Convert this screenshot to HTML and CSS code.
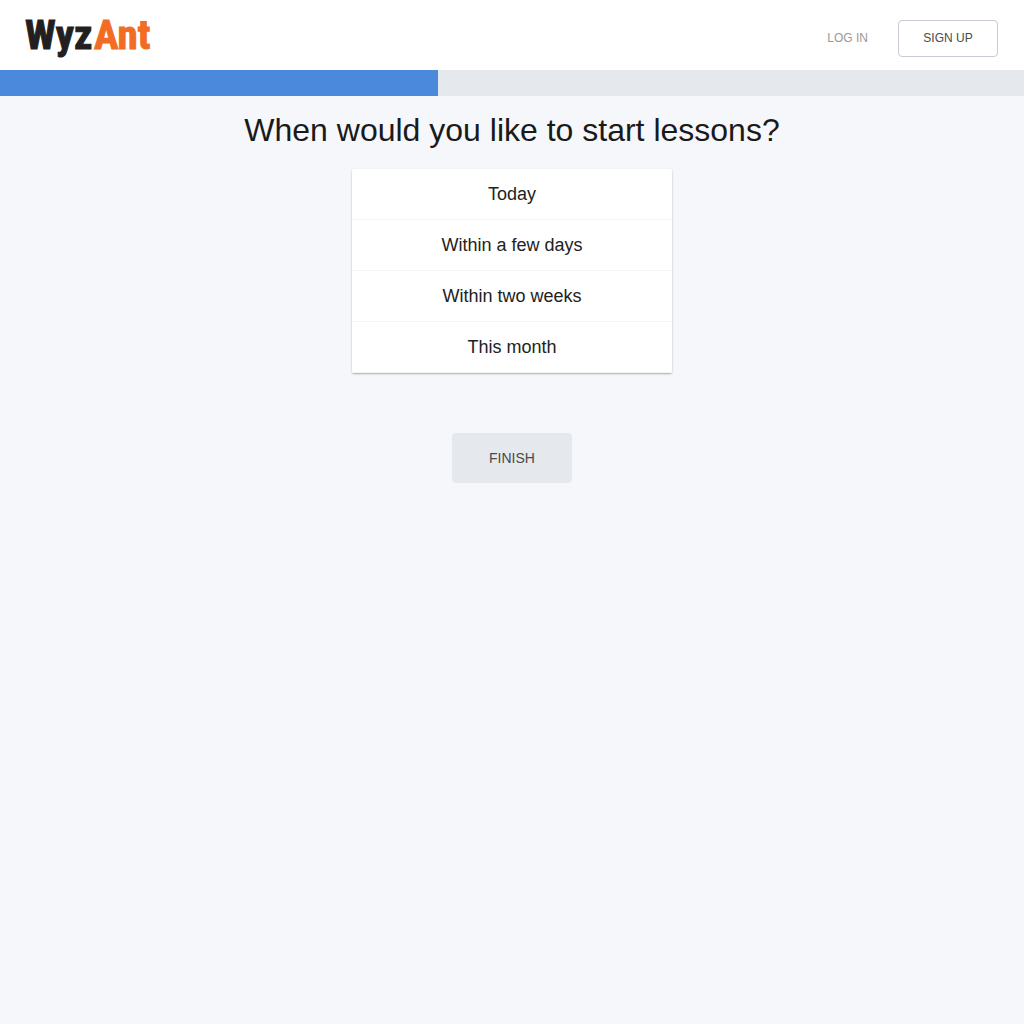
FILE: index.html
```html
<!DOCTYPE html>
<html lang="en">
<head>
  <meta charset="utf-8">
  <meta name="viewport" content="width=device-width, initial-scale=1">
  <title>WyzAnt</title>
  <link rel="stylesheet" href="styles.css">
</head>
<body>
  <header class="site-header">
    <a class="logo" href="#">
      <svg class="logo-mark" width="128" height="42" role="img" aria-label="WyzAnt">
        <text x="0" y="32" class="logo-text logo-dark">Wyz</text>
        <text x="69" y="32" class="logo-text logo-accent">Ant</text>
      </svg>
    </a>
    <nav class="account">
      <a class="log-in" href="#">LOG IN</a>
      <button class="sign-up" type="button">SIGN UP</button>
    </nav>
  </header>
  <div class="progress"><div class="progress-bar"></div></div>
  <main class="question">
    <h1 class="title">When would you like to start lessons?</h1>
    <div class="options">
      <button class="option" type="button">Today</button>
      <button class="option" type="button">Within a few days</button>
      <button class="option" type="button">Within two weeks</button>
      <button class="option" type="button">This month</button>
    </div>
    <button class="finish" type="button">FINISH</button>
  </main>
</body>
</html>
```
FILE: styles.css
```css
* {
  box-sizing: border-box;
}

body {
  margin: 0;
  background: #f5f7fb;
  color: #1a1a1a;
  font-family: "Liberation Sans", Arial, sans-serif;
}

button {
  font-family: inherit;
  cursor: pointer;
}

.site-header {
  display: flex;
  justify-content: space-between;
  align-items: flex-start;
  height: 70px;
  padding: 0 26px 0 25px;
  background: #fff;
}

.logo {
  display: block;
  padding-top: 17px;
  text-decoration: none;
}

.logo-mark {
  display: block;
  overflow: visible;
}

.logo-text {
  font-family: "Liberation Sans Narrow", "Roboto Condensed", sans-serif;
  font-size: 41px;
  font-weight: 700;
  stroke-width: 1px;
}

.logo-dark {
  fill: #231f20;
  stroke: #231f20;
}

.logo-accent {
  fill: #f36c24;
  stroke: #f36c24;
}

.account {
  display: flex;
  align-items: center;
  gap: 30px;
  padding-top: 20px;
}

.log-in {
  padding-bottom: 2px;
  color: #999;
  font-size: 12px;
  text-decoration: none;
}

.sign-up {
  width: 100px;
  height: 37px;
  padding: 0 0 2px;
  border: 1px solid #c9cbd9;
  border-radius: 4px;
  background: #fff;
  color: #4a4a4a;
  font-size: 12px;
}

.progress {
  height: 26px;
  background: #e5e8ed;
}

.progress-bar {
  width: 42.8%;
  height: 100%;
  background: #4a89dc;
}

.question {
  display: flex;
  flex-direction: column;
  align-items: center;
  padding: 14px 20px 40px;
}

.title {
  margin: 0 0 19px;
  font-size: 32px;
  font-weight: 400;
  line-height: 40px;
  text-align: center;
}

.options {
  width: 100%;
  max-width: 320px;
  margin-bottom: 60px;
  border-radius: 2px;
  background: #fff;
  box-shadow: 0 1px 2px rgba(0, 0, 0, 0.3);
}

.option {
  display: block;
  width: 100%;
  height: 51px;
  padding: 0;
  border: 0;
  border-bottom: 1px solid #f2f3f5;
  background: transparent;
  color: #222;
  font-size: 18px;
}

.finish {
  width: 120px;
  height: 50px;
  padding: 0;
  border: 0;
  border-radius: 4px;
  background: #e5e8ed;
  color: #4a4a4a;
  font-size: 14px;
}
```
